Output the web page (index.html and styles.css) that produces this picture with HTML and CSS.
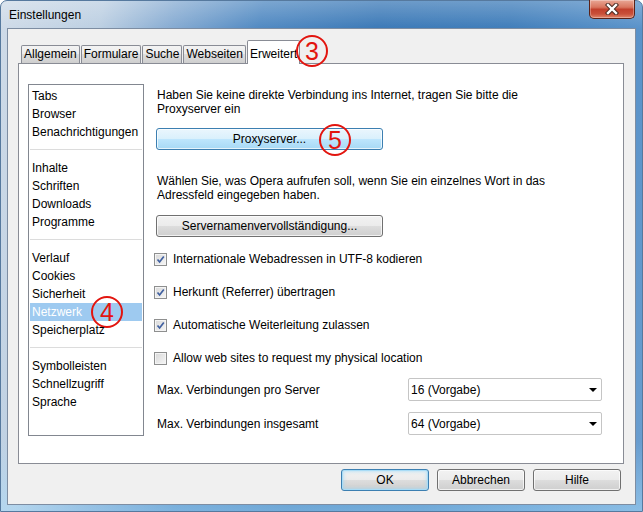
FILE: index.html
```html
<!DOCTYPE html>
<html lang="de">
<head>
    <meta charset="UTF-8">
    <title>Einstellungen</title>
    <link rel="stylesheet" href="styles.css">
</head>
<body>
    <div class="window">
        <div class="titlebar">
            <span class="title">Einstellungen</span>
            <div class="close">
                <svg width="14" height="12" viewBox="0 0 14 12">
                    <path d="M3 2 L11 10 M11 2 L3 10" stroke="#4a2a22" stroke-width="4.4" stroke-linecap="square"/>
                    <path d="M3 2 L11 10 M11 2 L3 10" stroke="#ffffff" stroke-width="2.4" stroke-linecap="square"/>
                </svg>
            </div>
        </div>

        <div class="client">
            <div class="tabbox">
                <div class="tabs">
                    <div class="tab">Allgemein</div>
                    <div class="tab">Formulare</div>
                    <div class="tab">Suche</div>
                    <div class="tab">Webseiten</div>
                    <div class="tab active">Erweitert<span class="marker marker-tab">3</span></div>
                </div>

                <div class="panel">
                    <div class="nav">
                        <div class="nav-item">Tabs</div>
                        <div class="nav-item">Browser</div>
                        <div class="nav-item">Benachrichtigungen</div>
                        <div class="nav-sep"></div>
                        <div class="nav-item">Inhalte</div>
                        <div class="nav-item">Schriften</div>
                        <div class="nav-item">Downloads</div>
                        <div class="nav-item">Programme</div>
                        <div class="nav-sep"></div>
                        <div class="nav-item">Verlauf</div>
                        <div class="nav-item">Cookies</div>
                        <div class="nav-item">Sicherheit</div>
                        <div class="nav-item selected">Netzwerk<span class="marker marker-nav">4</span></div>
                        <div class="nav-item">Speicherplatz</div>
                        <div class="nav-sep"></div>
                        <div class="nav-item">Symbolleisten</div>
                        <div class="nav-item">Schnellzugriff</div>
                        <div class="nav-item">Sprache</div>
                    </div>

                    <div class="content">
                        <p class="hint">Haben Sie keine direkte Verbindung ins Internet, tragen Sie bitte die Proxyserver ein</p>
                        <div class="btn wide hot">Proxyserver...<span class="marker marker-btn">5</span></div>

                        <p class="hint">Wählen Sie, was Opera aufrufen soll, wenn Sie ein einzelnes Wort in das Adressfeld eingegeben haben.</p>
                        <div class="btn wide">Servernamenvervollständigung...</div>

                        <div class="checks">
                            <div class="check-row"><span class="box checked"></span>Internationale Webadressen in UTF-8 kodieren</div>
                            <div class="check-row"><span class="box checked"></span>Herkunft (Referrer) übertragen</div>
                            <div class="check-row"><span class="box checked"></span>Automatische Weiterleitung zulassen</div>
                            <div class="check-row"><span class="box"></span>Allow web sites to request my physical location</div>
                        </div>

                        <div class="selects">
                            <label class="sel-label">Max. Verbindungen pro Server</label>
                            <div class="combo"><span>16 (Vorgabe)</span><span class="arrow"></span></div>
                            <label class="sel-label">Max. Verbindungen insgesamt</label>
                            <div class="combo"><span>64 (Vorgabe)</span><span class="arrow"></span></div>
                        </div>
                    </div>
                </div>
            </div>

            <div class="footer">
                <div class="btn dlg default">OK</div>
                <div class="btn dlg">Abbrechen</div>
                <div class="btn dlg">Hilfe</div>
            </div>
        </div>
    </div>
</body>
</html>
```

FILE: styles.css
```css
body {
    margin: 0;
    font-family: "Liberation Sans", Arial, sans-serif;
    font-size: 12px;
    color: #000;
    background: #fff;
}
.window {
    width: 643px;
    height: 512px;
    box-sizing: border-box;
    padding: 0 6px 6px 6px;
    display: flex;
    flex-direction: column;
    border: 1px solid #56799e;
    border-radius: 7px 7px 0 0;
    background:
        linear-gradient(to bottom, rgba(255,255,255,0.25), rgba(255,255,255,0) 28px, rgba(255,255,255,0) 440px, rgba(170,220,250,0.5)),
        linear-gradient(100deg, #cfdbe8 0%, #bccfe2 14%, #86abd2 24%, #5089c2 36%, #3b79b7 52%, #3f7dba 70%, #5690c8 86%, #6c9fd0 100%);
}
.titlebar {
    height: 27px;
    display: flex;
    align-items: center;
    padding-left: 2px;
}
.title {
    flex: 1;
}
.close {
    align-self: flex-start;
    margin-top: -1px;
    margin-right: 1px;
    width: 44px;
    height: 18px;
    display: flex;
    align-items: center;
    justify-content: center;
    border: 1px solid #5a2218;
    border-top: none;
    border-radius: 0 0 5px 5px;
    background: linear-gradient(#e9a795, #d9765f 40%, #c2402c 52%, #c9503a 78%, #e0866b);
    box-shadow: inset 0 0 0 1px rgba(255,255,255,0.3);
}
.client {
    flex: 1;
    display: flex;
    flex-direction: column;
    background: #f0f0f0;
    border: 1px solid #7d8da2;
    padding-top: 11px;
}
.tabbox {
    flex: 1;
    display: flex;
    flex-direction: column;
    margin: 0 11px 0 10px;
}
.tabs {
    display: flex;
    align-items: flex-end;
    gap: 1px;
    height: 24px;
    padding-left: 3px;
    margin-bottom: -1px;
    position: relative;
    z-index: 1;
}
.tab {
    height: 17px;
    line-height: 17px;
    padding: 0 2px;
    margin-bottom: 1px;
    border: 1px solid #898c95;
    border-bottom: none;
    border-radius: 2px 2px 0 0;
    background: linear-gradient(#f3f3f3, #ebebeb 50%, #dddddd 50%, #cfcfcf);
}
.tab.active {
    position: relative;
    height: 17px;
    padding-top: 5px;
    padding-bottom: 1px;
    margin-bottom: 0;
    background: #fff;
}
.panel {
    height: 399px;
    display: flex;
    background: #fff;
    border: 1px solid #898c95;
}
.nav {
    width: 112px;
    margin: 20px 0 27px 9px;
    padding: 2px 1px 0 1px;
    border: 1px solid #828790;
    background: #fff;
}
.nav-item {
    position: relative;
    height: 18px;
    line-height: 18px;
    padding-left: 2px;
    white-space: nowrap;
}
.nav-item.selected {
    background: #9ecaf0;
    color: #fff;
}
.nav-sep {
    height: 1px;
    margin: 8px 0 9px 0;
    background: #dcdcdc;
}
.content {
    flex: 1;
    padding: 24px 0 0 10px;
}
.hint {
    max-width: 390px;
    margin: 0 0 12px 3px;
    line-height: 14px;
}
.btn {
    position: relative;
    box-sizing: border-box;
    height: 22px;
    display: flex;
    align-items: center;
    justify-content: center;
    border: 1px solid #707070;
    border-radius: 3px;
    background: linear-gradient(#f2f2f2, #ebebeb 50%, #dddddd 50%, #cfcfcf);
    box-shadow: inset 0 0 0 1px rgba(255,255,255,0.7);
}
.btn.wide {
    width: 227px;
    margin: 0 0 24px 2px;
}
.btn.wide + .hint {
    margin-bottom: 13px;
}
.btn.hot {
    border-color: #3c7fb1;
    background: linear-gradient(#eaf6fd, #d9f0fc 50%, #bee6fd 50%, #a7d9f5);
}
.checks {
    display: flex;
    flex-direction: column;
    gap: 17px;
    margin-top: -10px;
}
.check-row {
    height: 16px;
    display: flex;
    align-items: center;
    gap: 6px;
}
.box {
    width: 11px;
    height: 11px;
    border: 1px solid #8e8f8f;
    background: linear-gradient(135deg, #d8d8d8, #f6f6f6);
    box-shadow: inset 0 0 0 1px #f4f4f4;
}
.box.checked {
    background:
        url("data:image/svg+xml,%3Csvg xmlns='http://www.w3.org/2000/svg' width='11' height='11'%3E%3Cpath d='M2.5 5.5 L4.6 8 L8.8 2.4' fill='none' stroke='%234060a0' stroke-width='1.7'/%3E%3C/svg%3E") no-repeat,
        linear-gradient(135deg, #d8d8d8, #f6f6f6);
}
.selects {
    display: grid;
    grid-template-columns: 254px 194px;
    row-gap: 11px;
    align-items: center;
    margin-top: 12px;
}
.sel-label {
    padding-left: 3px;
}
.combo {
    box-sizing: border-box;
    height: 23px;
    display: flex;
    align-items: center;
    justify-content: space-between;
    padding: 0 4px 0 2px;
    border: 1px solid #c5c5c5;
    border-radius: 2px;
    background: #fff;
}
.arrow {
    width: 0;
    height: 0;
    border-left: 4px solid transparent;
    border-right: 4px solid transparent;
    border-top: 4px solid #000;
}
.footer {
    display: flex;
    justify-content: flex-end;
    gap: 8px;
    padding: 5px 14px 13px 0;
}
.btn.dlg {
    width: 88px;
}
.btn.default {
    border-color: #3c7fb1;
    box-shadow: inset 0 0 0 1px #a9dcf6, inset 0 0 3px 2px rgba(150,215,250,0.5);
}
.marker {
    position: absolute;
    box-sizing: border-box;
    width: 32px;
    height: 32px;
    display: flex;
    align-items: center;
    justify-content: center;
    border: 2px solid #e2150f;
    border-radius: 50%;
    color: #e2150f;
    font-size: 25px;
    line-height: 1;
}
.marker-tab {
    left: 48px;
    top: -6px;
}
.marker-nav {
    left: 61px;
    top: -7px;
}
.marker-btn {
    left: 162px;
    top: -5px;
}
```
